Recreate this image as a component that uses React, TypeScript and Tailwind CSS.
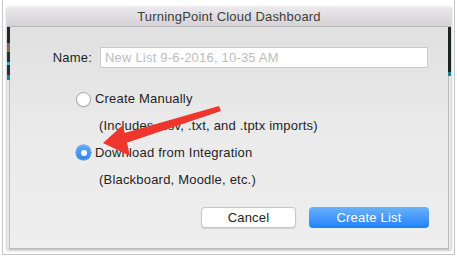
const font = { fontFamily: '"Liberation Sans", Arial, sans-serif' };

function Radio({ checked }: { checked?: boolean }) {
  if (checked) {
    return (
      <span className="flex h-[15px] w-[15px] shrink-0 items-center justify-center rounded-full bg-linear-to-b from-[#62abf9] to-[#2a83f1] shadow-[0_0_0_0.5px_#2b7be0]">
        <span className="h-[6px] w-[6px] rounded-full bg-white" />
      </span>
    );
  }
  return (
    <span className="h-[15px] w-[15px] shrink-0 rounded-full border border-[#a6a6a6] bg-white shadow-[0_0.5px_1px_rgba(0,0,0,0.15)]" />
  );
}

export default function App() {
  return (
    <div className="relative h-[257px] w-[457px] overflow-hidden bg-white text-[13px] tracking-[0.2px] text-[#1f1f1f]" style={font}>
      <div className="mx-[2px] h-[255px] border-x border-b border-[#c6c6c6] pl-[4px] pr-[3px] pt-[7px]">
        <div className="flex h-[242px] flex-col shadow-[0_1px_3px_rgba(0,0,0,0.35)]">
          <div className="flex h-[20px] shrink-0 items-center justify-center border-b border-[#b8b7b8] bg-linear-to-b from-[#ebe9eb] to-[#d4d2d4] text-[#3d3d3d]">
            TurningPoint Cloud Dashboard
          </div>
          <div className="flex flex-1 bg-[#e4e4e4]">
            <div className="flex w-[3px] flex-col">
              <div className="h-[16px] bg-[#1d2828]" />
              <div className="h-[9px] bg-[#7b6c5c]" />
              <div className="h-[10px] bg-[#263232]" />
              <div className="h-[3px] bg-[#33b4d6]" />
              <div className="h-[10px] bg-[#253131]" />
              <div className="h-[5px] bg-[#1c8484]" />
              <div className="flex-1 border-r border-[#bdbdbd] bg-[#e8e8e8]" />
            </div>
            <div className="flex flex-1 flex-col border-b border-[#bcbcbc] bg-linear-to-b from-[#dfe0df] via-[#ebebeb] to-[#eeeeee] pt-[20px]">
              <div className="flex h-[21px] items-center gap-[8px]">
                <span className="w-[82px] text-right">Name:</span>
                <input
                  className="h-[21px] w-[328px] border border-[#cacaca] bg-white px-[4px] text-[13px] tracking-[0.2px] outline-none placeholder:text-[#bcbcbc]"
                  style={font}
                  placeholder="New List 9-6-2016, 10-35 AM"
                />
              </div>
              <div className="mt-[18px] flex flex-col pl-[66px]">
                <div className="flex h-[26px] items-center gap-[4px]">
                  <Radio />
                  <span>Create Manually</span>
                </div>
                <div className="flex h-[27px] items-center pl-[23px]">(Includes .csv, .txt, and .tptx imports)</div>
                <div className="flex h-[27px] items-center gap-[4px]">
                  <Radio checked />
                  <span>Download from Integration</span>
                </div>
                <div className="flex h-[27px] items-center pl-[23px]">(Blackboard, Moodle, etc.)</div>
              </div>
              <div className="mt-[14px] flex justify-end gap-[13px] pr-[19px]">
                <button className="h-[21px] w-[95px] rounded-[4px] border border-[#c8c8c8] bg-white text-[13px] tracking-[0.2px] text-[#1f1f1f] shadow-[0_0.5px_1px_rgba(0,0,0,0.12)]" style={font}>
                  Cancel
                </button>
                <button className="h-[21px] w-[120px] rounded-[4px] bg-linear-to-b from-[#6ab2fb] to-[#1c80fb] text-[13px] tracking-[0.2px] text-white" style={font}>
                  Create List
                </button>
              </div>
            </div>
            <div className="flex w-[3px] flex-col">
              <div className="h-[45px] bg-[#1c2524]" />
              <div className="h-[4px] bg-[#1b8383]" />
              <div className="flex-1 border-l border-[#bdbdbd] bg-[#e8e8e8]" />
            </div>
          </div>
        </div>
      </div>
      <svg className="pointer-events-none absolute inset-0" width="457" height="257" viewBox="0 0 457 257">
        <polygon points="219,106 221,111 126,143 121,134" fill="#f0352c" />
        <polygon points="103,143 123,125 130,156" fill="#f0352c" />
      </svg>
    </div>
  );
}
